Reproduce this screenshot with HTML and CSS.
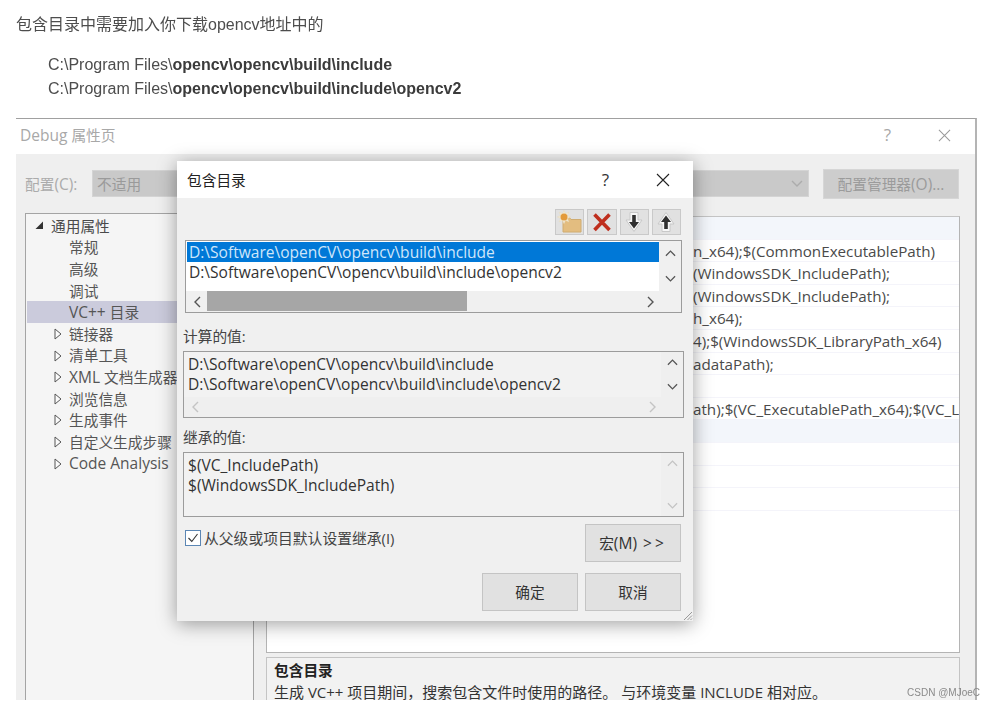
FILE: index.html
```html
<!DOCTYPE html>
<html lang="zh">
<head>
<meta charset="utf-8">
<title>包含目录</title>
<link rel="stylesheet" href="styles.css">
</head>
<body>
<svg class="defs" width="0" height="0" aria-hidden="true">
  <symbol id="up" viewBox="0 0 12 8"><polyline points="1,7 6,2 11,7" fill="none" stroke="currentColor" stroke-width="1.4"/></symbol>
  <symbol id="down" viewBox="0 0 12 8"><polyline points="1,1 6,6 11,1" fill="none" stroke="currentColor" stroke-width="1.4"/></symbol>
  <symbol id="left" viewBox="0 0 8 12"><polyline points="7,1 2,6 7,11" fill="none" stroke="currentColor" stroke-width="1.4"/></symbol>
  <symbol id="right" viewBox="0 0 8 12"><polyline points="1,1 6,6 1,11" fill="none" stroke="currentColor" stroke-width="1.4"/></symbol>
  <symbol id="closed" viewBox="0 0 8 12"><polygon points="1,1 7,6 1,11" fill="#fafafa" stroke="#555" stroke-width="1"/></symbol>
  <symbol id="close" viewBox="0 0 14 14"><path d="M1 1L13 13M13 1L1 13" fill="none" stroke="currentColor" stroke-width="1.1"/></symbol>
</svg>

<p class="intro">包含目录中需要加入你下载opencv地址中的</p>
<blockquote class="paths">
  <div>C:\Program Files\<strong>opencv\opencv\build\include</strong></div>
  <div>C:\Program Files\<strong>opencv\opencv\build\include\opencv2</strong></div>
</blockquote>

<section class="shot">
  <div class="win">
    <header class="win-title">
      <span class="win-name">Debug <span class="zh">属性页</span></span>
      <span class="win-help">?</span>
      <svg class="win-close"><use href="#close"/></svg>
    </header>
    <div class="config">
      <label class="config-label"><span class="zh">配置</span>(C):</label>
      <div class="config-select"><span class="zh">不适用</span><svg class="config-chev"><use href="#down"/></svg></div>
      <div class="config-btn"><span class="zh">配置管理器</span>(O)...</div>
    </div>
    <div class="panes">
      <nav class="tree">
        <div class="node lvl0 zh"><svg class="tri" viewBox="0 0 9 9"><polygon points="8,0.5 8,8 0.5,8" fill="#333"/></svg>通用属性</div>
        <div class="node lvl1 zh">常规</div>
        <div class="node lvl1 zh">高级</div>
        <div class="node lvl1 zh">调试</div>
        <div class="node lvl1 current">VC++&nbsp;<span class="zh">目录</span></div>
        <div class="node lvl1 zh"><svg class="exp"><use href="#closed"/></svg>链接器</div>
        <div class="node lvl1 zh"><svg class="exp"><use href="#closed"/></svg>清单工具</div>
        <div class="node lvl1"><svg class="exp"><use href="#closed"/></svg>XML&nbsp;<span class="zh">文档生成器</span></div>
        <div class="node lvl1 zh"><svg class="exp"><use href="#closed"/></svg>浏览信息</div>
        <div class="node lvl1 zh"><svg class="exp"><use href="#closed"/></svg>生成事件</div>
        <div class="node lvl1 zh"><svg class="exp"><use href="#closed"/></svg>自定义生成步骤</div>
        <div class="node lvl1"><svg class="exp"><use href="#closed"/></svg>Code Analysis</div>
      </nav>
      <div class="props">
        <div class="grid">
          <div class="row head"></div>
          <div class="row">n_x64);$(CommonExecutablePath)</div>
          <div class="row">(WindowsSDK_IncludePath);</div>
          <div class="row">(WindowsSDK_IncludePath);</div>
          <div class="row">h_x64);</div>
          <div class="row">4);$(WindowsSDK_LibraryPath_x64)</div>
          <div class="row">adataPath);</div>
          <div class="row"></div>
          <div class="row">ath);$(VC_ExecutablePath_x64);$(VC_LibraryPath_x64)</div>
          <div class="row head"></div>
          <div class="row"></div>
          <div class="row"></div>
          <div class="row"></div>
        </div>
        <div class="desc">
          <strong>包含目录</strong>
          <div>生成 VC++ 项目期间，搜索包含文件时使用的路径。 与环境变量 INCLUDE 相对应。</div>
        </div>
      </div>
    </div>
  </div>

  <div class="dlg">
    <header class="dlg-title">
      <span class="dlg-name zh">包含目录</span>
      <span class="dlg-help">?</span>
      <svg class="dlg-close"><use href="#close"/></svg>
    </header>
    <div class="dlg-body">
      <div class="tools">
        <button class="tool"><svg viewBox="0 0 26 24" width="26" height="24">
          <path d="M6 7H12L14 9.500H24V22H6Z" fill="#e3bd80" stroke="#d0ac70" stroke-width="1"/>
          <path d="M7 0.500L8.500 3.800L11.800 2.200L10.200 5.500L13.500 7L10.200 8.500L11.800 11.800L8.500 10.200L7 13.500L5.500 10.200L2.200 11.800L3.800 8.500L0.500 7L3.800 5.500L2.200 2.200L5.500 3.800Z" fill="#f4ecd8" stroke="#e8dcc0" stroke-width=".6"/>
          <circle cx="7" cy="7" r="3.500" fill="#e39a3a"/>
        </svg></button>
        <button class="tool"><svg viewBox="0 0 24 24" width="24" height="24">
          <path d="M4.500 4.500L19.500 20M19.500 4.500L4.500 20" fill="none" stroke="#bf2f1e" stroke-width="3.600"/>
        </svg></button>
        <button class="tool"><svg viewBox="0 0 22 24" width="22" height="24">
          <path d="M7 2.500H15V10H19L11 21.500L3 10H7Z" fill="#f6f6f6" stroke="#c8c8c8"/>
          <path d="M9.200 5H12.800V12H16L11 18.500L6 12H9.200Z" fill="#303030"/>
        </svg></button>
        <button class="tool"><svg viewBox="0 0 22 24" width="22" height="24">
          <path d="M7 21.500H15V14H19L11 2.500L3 14H7Z" fill="#f6f6f6" stroke="#c8c8c8"/>
          <path d="M9.200 19H12.800V12H16L11 5.500L6 12H9.200Z" fill="#303030"/>
        </svg></button>
      </div>

      <div class="box edit">
        <div class="box-text">
          <div class="line selected">D:\Software\openCV\opencv\build\include</div>
          <div class="line">D:\Software\openCV\opencv\build\include\opencv2</div>
        </div>
        <div class="vbar"><svg class="chev"><use href="#up"/></svg><svg class="chev"><use href="#down"/></svg></div>
        <div class="hbar">
          <svg class="hchev"><use href="#left"/></svg>
          <div class="thumb"></div>
          <svg class="hchev"><use href="#right"/></svg>
        </div>
      </div>

      <div class="cap cap-calc zh">计算的值:</div>
      <div class="box calc">
        <div class="box-text">
          <div class="line">D:\Software\openCV\opencv\build\include</div>
          <div class="line">D:\Software\openCV\opencv\build\include\opencv2</div>
        </div>
        <div class="vbar"><svg class="chev"><use href="#up"/></svg><svg class="chev"><use href="#down"/></svg></div>
        <div class="hbar muted">
          <svg class="hchev"><use href="#left"/></svg>
          <svg class="hchev"><use href="#right"/></svg>
        </div>
      </div>

      <div class="cap cap-inherit zh">继承的值:</div>
      <div class="box inherit">
        <div class="box-text">
          <div class="line">$(VC_IncludePath)</div>
          <div class="line">$(WindowsSDK_IncludePath)</div>
        </div>
        <div class="vbar muted"><svg class="chev"><use href="#up"/></svg><svg class="chev"><use href="#down"/></svg></div>
      </div>

      <div class="options">
        <label class="check"><span class="checkbox"><svg viewBox="0 0 14 14" width="14" height="14"><polyline points="2.5,7 5.8,10.5 11.5,3" fill="none" stroke="#333" stroke-width="1.1"/></svg></span>从父级或项目默认设置继承(I)</label>
        <button class="btn"><span class="zh">宏</span>(M) <span class="gt">&gt;&gt;</span></button>
      </div>
      <div class="actions">
        <button class="btn zh">确定</button>
        <button class="btn zh">取消</button>
      </div>
      <svg class="grip" viewBox="0 0 12 12" width="12" height="12"><path d="M11 3L3 11M11 6.500L6.500 11M11 9.500L9.500 11" stroke="#999" stroke-width="1" fill="none"/></svg>
    </div>
  </div>

  <div class="mark">CSDN @MJoeC</div>
</section>
</body>
</html>
```
FILE: styles.css
```css
* { box-sizing: border-box; }
html, body { margin: 0; padding: 0; }
body {
  width: 996px;
  height: 707px;
  overflow: hidden;
  background: #fff;
  color: #4d4d4d;
  font: 16px/24px "Liberation Sans", "Noto Sans CJK SC", sans-serif;
}
.defs { position: absolute; }
svg { display: block; flex: none; }

/* The reference is a resampled bitmap, so everything is very slightly soft */
.intro, .paths, .shot { filter: blur(.3px); }

.intro { margin: 0; padding: 13px 0 0 16px; }
.paths { margin: 16px 0 0; padding-left: 48px; }
.paths strong { color: #3b3b3b; }

.shot {
  position: relative;
  width: 996px;
  height: 582px;
  margin-top: 17px;
  overflow: hidden;
}

/* Shared: Latin text is drawn larger than the CJK text next to it */
.zh { font-size: 14.7px; }

/* Back window */
.win {
  width: 961px;
  height: 582px;
  margin-left: 16px;
  background: #efefef;
  border-top: 1px solid #a0a0a0;
  border-right: 2px solid #b4b4b4;
  font: 15.5px/20px "Open Sans", "Noto Sans CJK SC", sans-serif;
  color: #555;
}
.win-title {
  display: flex;
  align-items: center;
  height: 35px;
  padding: 0 21px 3px 4px;
  background: #fff;
  color: #a8a8a8;
}
.win-name { flex: 1; }
.win-help { margin-right: 47px; font-size: 17px; }
.win-close { width: 13px; height: 13px; color: #999; margin-right: 3px; }

.config {
  display: flex;
  align-items: center;
  height: 59px;
  padding-left: 9px;
  color: #ababab;
}
.config-label { width: 67px; }
.config-select {
  display: flex;
  align-items: center;
  justify-content: space-between;
  width: 717px;
  height: 27px;
  padding: 0 4px;
  background: #c9c9c9;
  color: #9a9a9a;
  border: 1px solid #d4d4d4;
}
.config-chev { width: 12px; height: 8px; color: #acacac; margin-right: 1px; }
.config-btn {
  display: flex;
  align-items: center;
  justify-content: center;
  width: 136px;
  height: 30px;
  margin-left: 14px;
  background: #cdcdcd;
  border: 1px solid #d6d6d6;
  color: #9b9b9b;
}

.panes { display: flex; height: 487px; padding-left: 9px; }
.tree {
  width: 229px;
  padding-top: 1px;
  background: #f5f5f5;
  border: 1px solid #a4a4a4;
  border-bottom: 0;
  color: #555;
}
.node { position: relative; display: flex; align-items: center; height: 21.6px; white-space: nowrap; }
.lvl0 { padding-left: 25px; color: #4a4a4a; }
.lvl1 { padding-left: 43px; }
.current { background: #cbcbdc; margin-left: 1px; padding-left: 42px; }
.tri { position: absolute; left: 9px; top: 6px; width: 9px; height: 9px; }
.exp { position: absolute; left: 28px; top: 5px; width: 8px; height: 12px; }

.props { width: 694px; margin-left: 12px; padding-top: 3px; }
.grid {
  height: 437px;
  background: #fff;
  border: 1px solid #b4b4b4;
  border-top-color: #c4c4c4;
  overflow: hidden;
  color: #4a4a4a;
  font-size: 15.2px;
}
.row {
  height: 22.6px;
  padding-left: 426px;
  border-bottom: 1px solid #f4f4fa;
  white-space: nowrap;
  line-height: 23px;
}
.head { background: #f3f6fb; }
.desc {
  height: 60px;
  margin-top: 4px;
  padding: 1px 7px;
  background: #f2f2f2;
  border: 1px solid #c4c4c4;
  color: #333;
  white-space: nowrap;
  font-size: 15px;
  line-height: 22px;
}
.desc strong { display: block; color: #222; font-size: 14.7px; }

/* Foreground dialog */
.dlg {
  position: absolute;
  left: 177px;
  top: 43px;
  width: 516px;
  height: 460px;
  background: #f0f0f0;
  box-shadow: 0 3px 18px rgba(0, 0, 0, .38);
  font: 15.55px/20px "Open Sans", "Noto Sans CJK SC", sans-serif;
  color: #333;
}
.dlg-title {
  display: flex;
  align-items: center;
  height: 37px;
  padding: 0 23px 0 10px;
  background: #fff;
}
.dlg-name { flex: 1; color: #222; }
.dlg-help { margin-right: 47px; font-size: 17px; }
.dlg-close { width: 14px; height: 14px; color: #222; }

.dlg-body { position: relative; height: 423px; padding: 11px 12px 0 6px; }
.tools { display: flex; justify-content: flex-end; gap: 3px; height: 31px; }
.tool {
  display: flex;
  align-items: center;
  justify-content: center;
  width: 29.25px;
  height: 26px;
  padding: 0;
  background: #e1e1e1;
  border: 1px solid #c9c9c9;
}

.box {
  display: grid;
  grid-template-columns: 1fr 22px;
  background: #f0f0f0;
  border: 1px solid #9c9c9c;
}
.box-text { padding: 1px 0 0 1px; }
.line { height: 20px; padding-left: 3px; white-space: nowrap; line-height: 20px; }
.selected { background: #0078d7; color: #cfe6fa; }
.edit { position: relative; width: 497px; height: 73px; margin-left: 2px; grid-template-rows: 50px 1fr; }
.edit .box-text { background: #fff; }
.edit .line { padding-left: 2px; }
.calc, .inherit { width: 501px; background: #efefef; }
.calc { height: 67px; grid-template-rows: 45px 1fr; }
.calc .box-text, .inherit .box-text { background: #f2f2f2; padding: 2px 0 0 1px; }
.inherit { height: 65px; }

.vbar {
  display: flex;
  flex-direction: column;
  align-items: center;
  justify-content: space-between;
  padding: 8px 0 7px;
  color: #555;
}
.edit .vbar { padding-bottom: 8px; }
.calc .vbar { padding: 6px 0; }
.inherit .vbar { padding: 6px 0; }
.chev { width: 11px; height: 8px; }
.hbar {
  display: flex;
  align-items: center;
  justify-content: space-between;
  grid-column: 1 / -1;
  padding: 0 26px 0 7px;
  color: #555;
}
.hchev { width: 8px; height: 12px; }
.edit .hbar { position: relative; }
.thumb { position: absolute; left: 21px; top: 0; width: 260px; height: 20px; background: #a6a6a6; }
.muted { color: #c4c4c4; }

.cap { color: #444; height: 20px; line-height: 20px; }
.cap-calc { margin-top: 13px; margin-bottom: 5px; }
.cap-inherit { margin-top: 9px; margin-bottom: 5px; }

.options {
  display: flex;
  justify-content: space-between;
  align-items: flex-start;
  height: 49px;
  margin-top: 7px;
}
.check { display: flex; align-items: center; gap: 3px; margin: 4px 0 0 2px; color: #444; font-size: 14.8px; }
.checkbox {
  display: flex;
  width: 16px;
  height: 16px;
  background: #fff;
  border: 1px solid #5b86b4;
}
.btn {
  width: 96px;
  height: 38px;
  padding: 0;
  background: #e1e1e1;
  border: 1px solid #c4c4c4;
  font: inherit;
  color: #333;
}
.gt { letter-spacing: 3px; margin-left: 2px; }
.actions { display: flex; justify-content: flex-end; gap: 7px; }
.actions .btn { font-size: 14.7px; }
.grip { position: absolute; right: 0; bottom: 0; }

.mark {
  position: absolute;
  right: 16px;
  bottom: 0;
  font: 10px/14px "Liberation Sans", sans-serif;
  color: #8a8a8a;
}
```
